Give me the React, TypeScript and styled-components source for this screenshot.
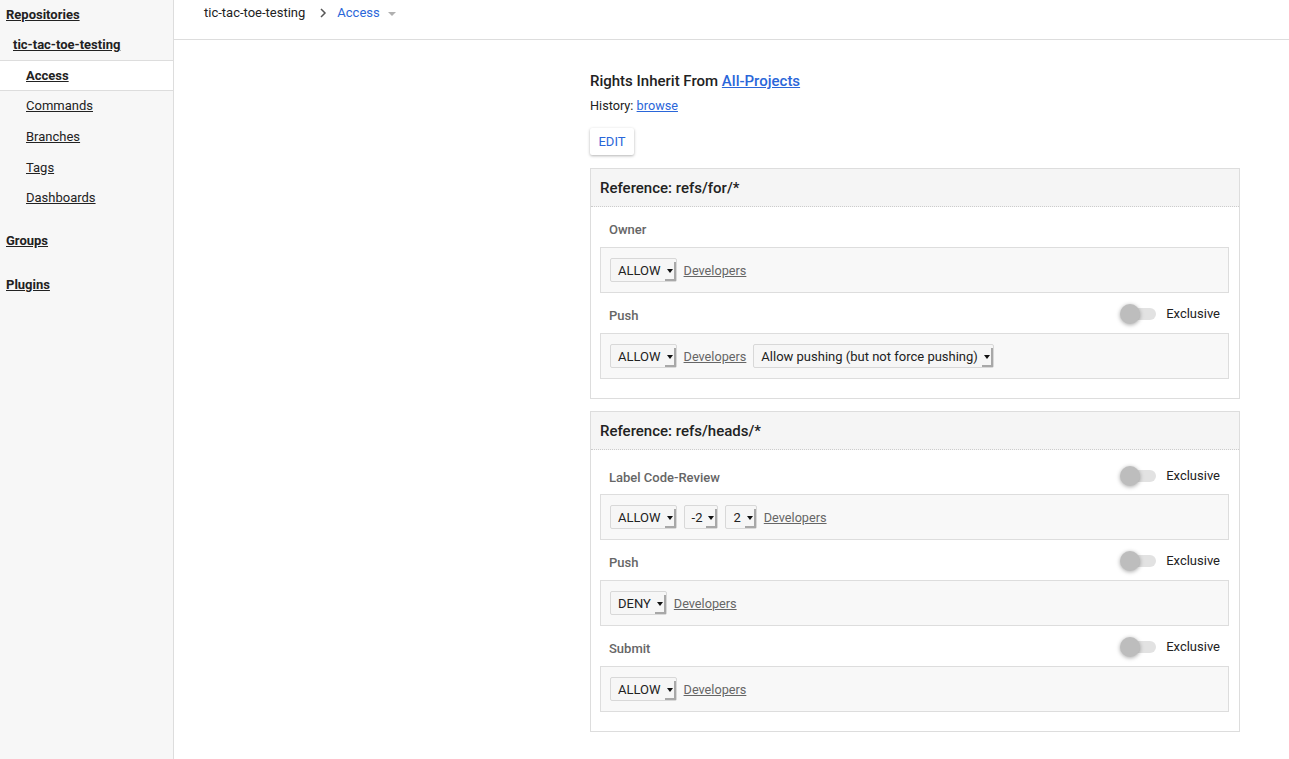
import React from 'react';
import styled, { createGlobalStyle } from 'styled-components';

const GlobalStyle = createGlobalStyle`
  html, body {
    margin: 0;
    padding: 0;
    background: #ffffff;
  }
  body {
    font-family: Roboto, 'Liberation Sans', Arial, sans-serif;
    font-size: 13px;
    color: #222222;
  }
`;

type Rule = {
  action: string;
  extras?: string[];
  after?: string;
};

type Permission = {
  name: string;
  exclusive?: boolean;
  rules: Rule[];
};

type Section = {
  ref: string;
  permissions: Permission[];
};

const sections: Section[] = [
  {
    ref: 'refs/for/*',
    permissions: [
      { name: 'Owner', rules: [{ action: 'ALLOW' }] },
      {
        name: 'Push',
        exclusive: true,
        rules: [{ action: 'ALLOW', after: 'Allow pushing (but not force pushing)' }],
      },
    ],
  },
  {
    ref: 'refs/heads/*',
    permissions: [
      { name: 'Label Code-Review', exclusive: true, rules: [{ action: 'ALLOW', extras: ['-2', '2'] }] },
      { name: 'Push', exclusive: true, rules: [{ action: 'DENY' }] },
      { name: 'Submit', exclusive: true, rules: [{ action: 'ALLOW' }] },
    ],
  },
];

const subNav = ['Access', 'Commands', 'Branches', 'Tags', 'Dashboards'];

const FakeSelect = ({ value }: { value: string }) => (
  <StyledSelect>
    <StyledSelectValue>{value}</StyledSelectValue>
    <StyledSelectArrow />
  </StyledSelect>
);

const Toggle = () => (
  <StyledToggle>
    <StyledTrack />
    <StyledKnob />
  </StyledToggle>
);

export default function App() {
  return (
    <>
      <GlobalStyle />
      <StyledPage>
        <StyledSidebar>
          <StyledNavTop>Repositories</StyledNavTop>
          <StyledNavRepo>tic-tac-toe-testing</StyledNavRepo>
          {subNav.map((item) => (
            <StyledNavSub key={item} $selected={item === 'Access'}>
              <span>{item}</span>
            </StyledNavSub>
          ))}
          <StyledNavGroup>Groups</StyledNavGroup>
          <StyledNavGroup>Plugins</StyledNavGroup>
        </StyledSidebar>

        <StyledMain>
          <StyledHeader>
            <StyledCrumb>tic-tac-toe-testing</StyledCrumb>
            <StyledChevron viewBox="0 0 10 10" width="10" height="10">
              <path d="M3 1 L7 5 L3 9" fill="none" stroke="#555" strokeWidth="1.5" />
            </StyledChevron>
            <StyledCrumbLink>Access</StyledCrumbLink>
            <StyledCaret />
          </StyledHeader>

          <StyledContent>
            <StyledInherit>
              Rights Inherit From <StyledLink>All-Projects</StyledLink>
            </StyledInherit>
            <StyledHistory>
              History: <StyledLink>browse</StyledLink>
            </StyledHistory>
            <StyledEditButton>EDIT</StyledEditButton>

            {sections.map((section) => (
              <StyledSection key={section.ref}>
                <StyledSectionHeader>Reference: {section.ref}</StyledSectionHeader>
                <StyledSectionBody>
                  {section.permissions.map((perm, idx) => (
                    <div key={perm.name}>
                      <StyledPermHeader $tall={idx === 0 && !!perm.exclusive}>
                        <StyledPermName>{perm.name}</StyledPermName>
                        {perm.exclusive && (
                          <StyledExclusive>
                            <Toggle />
                            <span>Exclusive</span>
                          </StyledExclusive>
                        )}
                      </StyledPermHeader>
                      {perm.rules.map((rule, i) => (
                        <StyledRule key={i}>
                          <FakeSelect value={rule.action} />
                          {rule.extras?.map((x) => <FakeSelect key={x} value={x} />)}
                          <StyledGroupLink>Developers</StyledGroupLink>
                          {rule.after && <FakeSelect value={rule.after} />}
                        </StyledRule>
                      ))}
                    </div>
                  ))}
                </StyledSectionBody>
              </StyledSection>
            ))}
          </StyledContent>
        </StyledMain>
      </StyledPage>
    </>
  );
}

const StyledPage = styled.div`
  display: flex;
  min-height: 100vh;
`;

const StyledSidebar = styled.nav`
  width: 173px;
  flex-shrink: 0;
  background: #f7f7f7;
  border-right: 1px solid #dddddd;
  display: flex;
  flex-direction: column;
`;

const StyledNavTop = styled.div`
  height: 30px;
  line-height: 30px;
  padding-left: 6px;
  font-weight: 700;
  text-decoration: underline;
`;

const StyledNavRepo = styled(StyledNavTop)`
  padding-left: 13px;
`;

const StyledNavSub = styled.div<{ $selected?: boolean }>`
  height: 30.6px;
  box-sizing: border-box;
  display: flex;
  align-items: center;
  padding-left: 26px;
  text-decoration: underline;
  font-weight: ${(p) => (p.$selected ? 700 : 400)};
  background: ${(p) => (p.$selected ? '#ffffff' : 'transparent')};
  border-top: ${(p) => (p.$selected ? '1px solid #dddddd' : 'none')};
  border-bottom: ${(p) => (p.$selected ? '1px solid #dddddd' : 'none')};
`;

const StyledNavGroup = styled(StyledNavTop)`
  margin-top: 13.5px;
  &:first-of-type {
    margin-top: 14px;
  }
`;

const StyledMain = styled.main`
  flex: 1;
  display: flex;
  flex-direction: column;
`;

const StyledHeader = styled.header`
  height: 40px;
  box-sizing: border-box;
  border-bottom: 1px solid #dddddd;
  display: flex;
  align-items: flex-start;
  padding: 4px 0 0 30px;
  line-height: 18px;
`;

const StyledCrumb = styled.span`
  color: #222222;
`;

const StyledChevron = styled.svg`
  margin: 4px 9px 0 13px;
`;

const StyledCrumbLink = styled.span`
  color: #2a66d9;
`;

const StyledCaret = styled.span`
  width: 0;
  height: 0;
  margin: 8px 0 0 8px;
  border-left: 4px solid transparent;
  border-right: 4px solid transparent;
  border-top: 4px solid #b0b0b0;
`;

const StyledContent = styled.div`
  width: 650px;
  padding: 31px 0 28px 416px;
  display: flex;
  flex-direction: column;
  align-items: flex-start;
`;

const StyledInherit = styled.div`
  font-size: 15px;
  font-weight: 500;
  line-height: 20px;
`;

const StyledLink = styled.a`
  color: #2a66d9;
  text-decoration: underline;
  cursor: pointer;
`;

const StyledHistory = styled.div`
  font-size: 12.7px;
  line-height: 20px;
  margin-top: 5px;
`;

const StyledEditButton = styled.button`
  margin-top: 12px;
  width: 44px;
  height: 27px;
  border: 0;
  border-radius: 2px;
  background: #ffffff;
  color: #2a66d9;
  font-family: Roboto, 'Liberation Sans', Arial, sans-serif;
  font-size: 13px;
  padding: 0;
  box-shadow: 0 1px 3px rgba(0, 0, 0, 0.3);
  cursor: pointer;
`;

const StyledSection = styled.section`
  align-self: stretch;
  margin-top: 13px;
  border: 1px solid #dddddd;
  & + & {
    margin-top: 12px;
  }
`;

const StyledSectionHeader = styled.div`
  height: 37px;
  display: flex;
  align-items: center;
  padding-left: 9px;
  background: #f5f5f5;
  border-bottom: 1px dotted #cccccc;
  font-size: 15px;
  font-weight: 500;
`;

const StyledSectionBody = styled.div`
  padding: 0 10px 19px 9px;
`;

const StyledPermHeader = styled.div<{ $tall?: boolean }>`
  height: ${(p) => (p.$tall ? 44 : 40)}px;
  box-sizing: border-box;
  padding: ${(p) => (p.$tall ? 10 : 4)}px 9px 0 9px;
  display: flex;
  align-items: center;
  justify-content: space-between;
`;

const StyledPermName = styled.span`
  color: #666666;
  font-size: 13px;
  font-weight: 500;
`;

const StyledExclusive = styled.label`
  display: flex;
  align-items: center;
  gap: 10px;
  margin-top: -3px;
  font-size: 13px;
  color: #222222;
`;

const StyledToggle = styled.span`
  position: relative;
  width: 37px;
  height: 20px;
  display: inline-block;
`;

const StyledTrack = styled.span`
  position: absolute;
  left: 4px;
  right: 0;
  top: 4px;
  height: 12px;
  border-radius: 6px;
  background: #e2e2e2;
`;

const StyledKnob = styled.span`
  position: absolute;
  left: 1px;
  top: 0;
  width: 20px;
  height: 20px;
  border-radius: 50%;
  background: #bdbdbd;
  box-shadow: 0 1px 4px rgba(0, 0, 0, 0.35);
`;

const StyledRule = styled.div`
  height: 46px;
  box-sizing: border-box;
  border: 1px solid #dddddd;
  background: #f8f8f8;
  display: flex;
  align-items: center;
  gap: 7px;
  padding-left: 9px;
`;

const StyledSelect = styled.span`
  height: 24px;
  box-sizing: border-box;
  display: inline-flex;
  align-items: stretch;
  border: 1px solid #d8d8d8;
  border-radius: 2px;
  background: #f6f6f6;
  color: #222222;
  font-size: 13px;
`;

const StyledSelectValue = styled.span`
  display: flex;
  align-items: center;
  padding: 0 4px 0 7px;
`;

const StyledSelectArrow = styled.span`
  width: 11px;
  position: relative;
  box-shadow: inset -2px -2px 0 #a8a8a8;
  margin: 3px 0 0 0;
  &::after {
    content: '';
    position: absolute;
    left: 2px;
    top: 7px;
    border-left: 3px solid transparent;
    border-right: 3px solid transparent;
    border-top: 4px solid #111111;
  }
`;

const StyledGroupLink = styled.a`
  color: #666666;
  text-decoration: underline;
  font-size: 12.7px;
  cursor: pointer;
`;
